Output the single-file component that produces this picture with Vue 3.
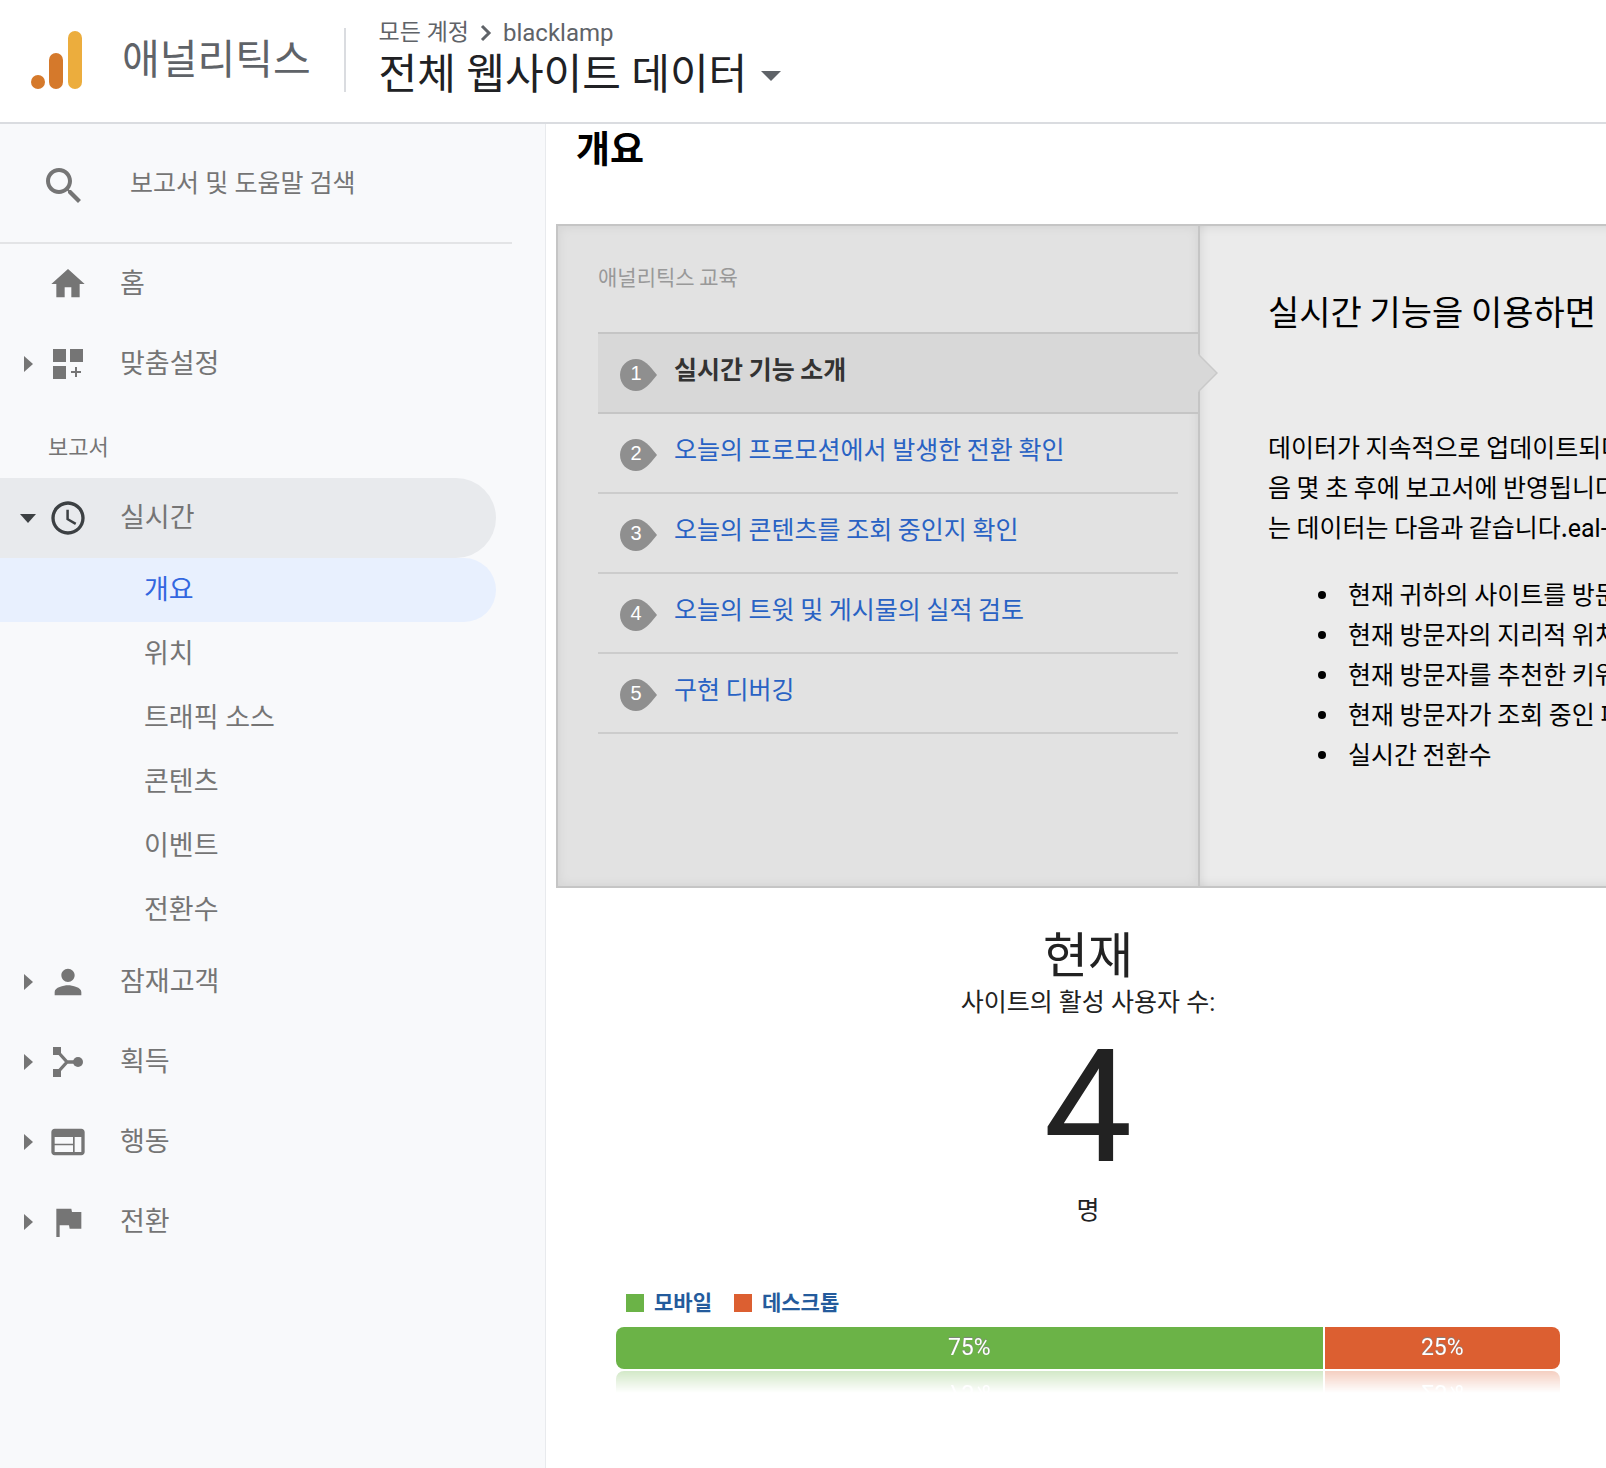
<script setup>
import { ref } from 'vue'

const query = ref('')

const realtimeItems = ['개요', '위치', '트래픽 소스', '콘텐츠', '이벤트', '전환수']
const current = '개요'

const lessons = [
  '실시간 기능 소개',
  '오늘의 프로모션에서 발생한 전환 확인',
  '오늘의 콘텐츠를 조회 중인지 확인',
  '오늘의 트윗 및 게시물의 실적 검토',
  '구현 디버깅',
]

const facts = [
  '현재 귀하의 사이트를 방문',
  '현재 방문자의 지리적 위치',
  '현재 방문자를 추천한 키워',
  '현재 방문자가 조회 중인 페',
  '실시간 전환수',
]

const devices = [
  { name: '모바일', share: 75, tone: 'green' },
  { name: '데스크톱', share: 25, tone: 'orange' },
]

const sections = [
  { name: '잠재고객', icon: 'person' },
  { name: '획득', icon: 'merge' },
  { name: '행동', icon: 'web' },
  { name: '전환', icon: 'flag' },
]
</script>

<template>
  <div class="app">
    <header class="topbar">
      <a class="brand" href="#">
        <svg class="logo" width="52" height="58" viewBox="0 0 52 58" aria-hidden="true">
          <circle cx="7" cy="51" r="7" fill="#d5792b" />
          <rect x="18" y="22" width="14" height="36" rx="7" fill="#d5792b" />
          <rect x="37" y="0" width="14" height="58" rx="7" fill="#ecad3d" />
        </svg>
        <span class="product">애널리틱스</span>
      </a>
      <div class="account">
        <div class="crumbs">
          <span>모든 계정</span>
          <svg width="12" height="18" viewBox="0 0 12 18" aria-hidden="true">
            <path d="M2 2l7 7-7 7" fill="none" stroke="#5f6368" stroke-width="3" />
          </svg>
          <span class="property">blacklamp</span>
        </div>
        <button class="view" type="button">
          <span>전체 웹사이트 데이터</span>
          <svg width="20" height="12" viewBox="0 0 20 12" aria-hidden="true">
            <path d="M0 2h20L10 12z" fill="#5f6368" />
          </svg>
        </button>
      </div>
    </header>

    <div class="body">
      <aside class="sidebar">
        <label class="search">
          <svg width="48" height="48" viewBox="0 0 24 24" fill="#757575" aria-hidden="true">
            <path d="M15.5 14h-.79l-.28-.27C15.41 12.59 16 11.11 16 9.5 16 5.91 13.09 3 9.5 3S3 5.91 3 9.5 5.91 16 9.5 16c1.61 0 3.09-.59 4.23-1.57l.27.28v.79l5 4.99L20.49 19l-4.99-5zm-6 0C7.01 14 5 11.99 5 9.5S7.01 5 9.5 5 14 7.01 14 9.5 11.99 14 9.5 14z" />
          </svg>
          <input v-model="query" type="text" placeholder="보고서 및 도움말 검색" aria-label="보고서 및 도움말 검색" />
        </label>

        <nav>
          <a class="row" href="#">
            <span class="arrow"></span>
            <svg class="icon" viewBox="0 0 24 24" aria-hidden="true"><path d="M10 20v-6h4v6h5v-8h3L12 3 2 12h3v8z" /></svg>
            <span>홈</span>
          </a>
          <a class="row" href="#">
            <svg class="arrow" viewBox="0 0 16 16" aria-hidden="true"><path d="M4 0l9 8-9 8z" /></svg>
            <svg class="icon" viewBox="0 0 40 40" aria-hidden="true">
              <path d="M5 5h13v13H5zM22 5h13v13H22zM5 22h13v13H5zM27 23h2v4h4v2h-4v4h-2v-4h-4v-2h4z" />
            </svg>
            <span>맞춤설정</span>
          </a>

          <h2 class="group">보고서</h2>

          <a class="row open" href="#">
            <svg class="arrow" viewBox="0 0 16 16" aria-hidden="true"><path d="M0 4h16l-8 9z" /></svg>
            <svg class="icon" viewBox="0 0 24 24" aria-hidden="true">
              <path d="M11.99 2C6.47 2 2 6.48 2 12s4.47 10 9.99 10C17.52 22 22 17.52 22 12S17.52 2 11.99 2zM12 20c-4.42 0-8-3.58-8-8s3.58-8 8-8 8 3.58 8 8-3.58 8-8 8z" />
              <path d="M12.5 7H11v6l5.25 3.15.75-1.23-4.5-2.67z" />
            </svg>
            <span>실시간</span>
          </a>
          <a
            v-for="item in realtimeItems"
            :key="item"
            class="sub"
            :class="{ current: item === current }"
            href="#"
          >{{ item }}</a>

          <a v-for="s in sections" :key="s.name" class="row" href="#">
            <svg class="arrow" viewBox="0 0 16 16" aria-hidden="true"><path d="M4 0l9 8-9 8z" /></svg>
            <svg v-if="s.icon === 'person'" class="icon" viewBox="0 0 24 24" aria-hidden="true">
              <path d="M12 12c2.21 0 4-1.79 4-4s-1.79-4-4-4-4 1.79-4 4 1.79 4 4 4zm0 2c-2.67 0-8 1.34-8 4v2h16v-2c0-2.66-5.33-4-8-4z" />
            </svg>
            <svg v-else-if="s.icon === 'merge'" class="icon" viewBox="0 0 40 40" aria-hidden="true">
              <path d="M5 5h8v8H5zM5 27h8v8H5z" />
              <circle cx="30" cy="20" r="5" />
              <path d="M10 10l9 10-9 10M19 20h11" fill="none" stroke="#757575" stroke-width="3.3" />
            </svg>
            <svg v-else-if="s.icon === 'web'" class="icon" viewBox="0 0 24 24" aria-hidden="true">
              <path d="M20 4H4c-1.1 0-1.99.9-1.99 2L2 18c0 1.1.9 2 2 2h16c1.1 0 2-.9 2-2V6c0-1.1-.9-2-2-2zm-5 14H4v-4h11v4zm0-5H4V9h11v4zm5 5h-4V9h4v9z" />
            </svg>
            <svg v-else class="icon" viewBox="0 0 24 24" aria-hidden="true">
              <path d="M14.4 6L14 4H5v17h2v-7h5.6l.4 2h7V6z" />
            </svg>
            <span>{{ s.name }}</span>
          </a>
        </nav>
      </aside>

      <main class="content">
        <h1>개요</h1>

        <section class="education">
          <div class="lessons">
            <p class="caption">애널리틱스 교육</p>
            <ol>
              <li v-for="(lesson, i) in lessons" :key="lesson" :class="{ active: i === 0 }">
                <span class="badge">
                  <svg width="38" height="34" viewBox="0 0 38 34" aria-hidden="true">
                    <path d="M17 1C8 1 1 8 1 17s7 16 16 16c8 0 13-6 21-16C30 7 25 1 17 1z" fill="#8f8f8f" />
                  </svg>
                  <span class="number">{{ i + 1 }}</span>
                </span>
                <strong v-if="i === 0">{{ lesson }}</strong>
                <a v-else href="#">{{ lesson }}</a>
                <svg v-if="i === 0" class="pointer" width="20" height="38" viewBox="0 0 20 38" aria-hidden="true">
                  <path d="M0 0l19 19L0 38z" fill="#d8d8d8" />
                  <path d="M1 1l18 18L1 37" fill="none" stroke="#c9c9c9" stroke-width="1.5" />
                </svg>
              </li>
            </ol>
          </div>
          <article class="article">
            <h2>실시간 기능을 이용하면</h2>
            <p>
              데이터가 지속적으로 업데이트되며<br />
              음 몇 초 후에 보고서에 반영됩니다<br />
              는 데이터는 다음과 같습니다.<span class="latin">eal-</span>
            </p>
            <ul>
              <li v-for="fact in facts" :key="fact">{{ fact }}</li>
            </ul>
          </article>
        </section>

        <section class="live">
          <h2>현재</h2>
          <p class="text">사이트의 활성 사용자 수:</p>
          <p class="count">4</p>
          <p class="text">명</p>

          <div class="legend">
            <span v-for="d in devices" :key="d.name" class="key">
              <i :class="d.tone"></i>{{ d.name }}
            </span>
          </div>
          <div class="bar">
            <div
              v-for="d in devices"
              :key="d.name"
              class="part"
              :class="d.tone"
              :style="{ flexGrow: d.share }"
            >{{ d.share }}%</div>
          </div>
        </section>
      </main>
    </div>
  </div>
</template>

<style>
body {
  margin: 0;
  background: #fff;
}
</style>

<style scoped>
.app {
  display: flex;
  flex-direction: column;
  min-height: 100vh;
  overflow: hidden;
  font-family: Roboto, "Noto Sans CJK KR", sans-serif;
  font-size: 25px;
  color: #000;
}

.app * {
  box-sizing: border-box;
}

h1,
h2,
p,
ol,
ul {
  margin: 0;
  padding: 0;
  font-weight: 400;
}

a {
  color: inherit;
  text-decoration: none;
}

svg {
  display: block;
  flex: none;
}

.topbar {
  display: flex;
  align-items: center;
  height: 124px;
  padding: 0 0 2px 31px;
  border-bottom: 2px solid #dadce0;
}

.brand {
  display: flex;
  align-items: center;
  gap: 39px;
  height: 64px;
  padding-right: 33px;
  border-right: 2px solid #dadce0;
}

.product {
  font-size: 41px;
  line-height: 64px;
  color: #5f6368;
}

.account {
  padding: 0 0 3px 33px;
}

.crumbs {
  display: flex;
  align-items: center;
  gap: 11px;
  font-size: 23px;
  line-height: 32px;
  color: #5f6368;
}

.property {
  font-size: 24px;
}

.view {
  display: flex;
  align-items: center;
  gap: 14px;
  padding: 0;
  border: 0;
  background: none;
  font-family: inherit;
  font-size: 42px;
  line-height: 52px;
  color: #202124;
}

.body {
  display: flex;
  flex: 1;
}

.sidebar {
  flex: 0 0 546px;
  background: #f8f9fb;
  border-right: 1px solid #e8eaed;
}

.search {
  display: flex;
  align-items: flex-start;
  gap: 42px;
  width: 512px;
  height: 120px;
  padding: 38px 0 0 40px;
  border-bottom: 2px solid #e3e4e6;
}

.search input {
  flex: 1;
  min-width: 0;
  height: 42px;
  padding: 0;
  border: 0;
  outline: 0;
  background: none;
  font-family: inherit;
  font-size: 25px;
  color: #757575;
}

.search input::placeholder {
  color: #757575;
  opacity: 1;
}

.row {
  display: flex;
  align-items: center;
  width: 496px;
  height: 80px;
  padding-left: 20px;
  border-radius: 0 40px 40px 0;
  font-size: 27px;
  line-height: 66px;
  color: #757575;
  fill: #757575;
}

.arrow {
  width: 16px;
  height: 16px;
  margin-right: 12px;
}

.icon {
  width: 40px;
  height: 40px;
  margin-right: 32px;
}

.open {
  background: #e8eaed;
  fill: #3c4043;
}

.group {
  padding: 28px 0 14px 48px;
  font-size: 22px;
  line-height: 32px;
  color: #757575;
}

.sub {
  display: block;
  width: 496px;
  height: 64px;
  padding-left: 144px;
  border-radius: 0 32px 32px 0;
  font-size: 27px;
  line-height: 64px;
  color: #757575;
}

.current {
  background: #e8f0fe;
  color: #3367e0;
}

.content {
  flex: 1;
  min-width: 0;
}

h1 {
  padding-left: 30px;
  font-size: 37px;
  font-weight: 700;
  line-height: 54px;
}

.education {
  display: flex;
  margin: 46px 0 0 10px;
  border: 2px solid #c5c5c5;
  border-right: 0;
  font-family: "Noto Sans CJK KR", sans-serif;
}

.lessons {
  flex: 0 0 642px;
  padding: 32px 0 152px 40px;
  background: #e2e2e2;
  border-right: 2px solid #c5c5c5;
  box-shadow: inset 0 0 12px rgba(0, 0, 0, 0.07);
}

.caption {
  font-size: 21px;
  line-height: 36px;
  color: #999;
}

ol {
  margin-top: 38px;
  list-style: none;
}

ol li {
  position: relative;
  display: flex;
  align-items: flex-start;
  gap: 17px;
  height: 80px;
  margin-right: 20px;
  padding: 24px 0 0 21px;
  border-bottom: 2px solid #ccc;
  line-height: 20px;
  color: #2962c4;
}

ol .active {
  height: 82px;
  margin-right: 0;
  border-top: 2px solid #c5c5c5;
  border-color: #c5c5c5;
  background: #d8d8d8;
  color: #333;
}

.badge {
  position: relative;
}

.number {
  position: absolute;
  top: 0;
  left: 0;
  width: 34px;
  font-family: "Liberation Sans", Arial, sans-serif;
  font-size: 20px;
  line-height: 30px;
  text-align: center;
  color: #fff;
}

.pointer {
  position: absolute;
  top: 20px;
  right: -20px;
}

.article {
  flex: 1;
  min-width: 0;
  padding: 60px 0 0 68px;
  overflow: hidden;
  background: #ebebeb;
  box-shadow: inset 12px 0 12px -12px rgba(0, 0, 0, 0.1), inset 0 12px 12px -12px rgba(0, 0, 0, 0.1),
    inset 0 -12px 12px -12px rgba(0, 0, 0, 0.1);
  line-height: 40px;
  white-space: nowrap;
}

.article h2 {
  font-size: 34px;
  line-height: 50px;
}

.article p {
  margin-top: 90px;
}

.latin {
  font-family: Roboto, sans-serif;
}

.article ul {
  margin-top: 24px;
  padding-left: 50px;
  list-style: none;
}

.article li {
  display: flex;
  align-items: center;
  gap: 22px;
}

.article li::before {
  content: "";
  flex: none;
  width: 8px;
  height: 8px;
  margin-top: 4px;
  border-radius: 50%;
  background: #000;
}

.live {
  padding: 37px 46px 0 70px;
  text-align: center;
  color: #222;
}

.live h2 {
  font-size: 49px;
  line-height: 64px;
}

.text {
  line-height: 28px;
}

.count {
  font-size: 158px;
  line-height: 180px;
}

.legend {
  display: flex;
  gap: 22px;
  margin-top: 63px;
  padding-left: 10px;
  font-size: 21px;
  font-weight: 700;
  line-height: 30px;
  color: #245b9c;
}

.key {
  display: flex;
  align-items: center;
  gap: 10px;
}

.key i {
  width: 18px;
  height: 18px;
}

.bar {
  display: flex;
  gap: 2px;
  height: 42px;
  margin-top: 9px;
  border-radius: 8px;
  overflow: hidden;
  -webkit-box-reflect: below 2px linear-gradient(transparent 48%, rgba(255, 255, 255, 0.3));
}

.part {
  flex-basis: 0;
  font-size: 23px;
  line-height: 42px;
  color: #fff;
  text-shadow: 0 -1px 1px #808080;
}

.green {
  background: #6bb347;
}

.orange {
  background: #dc5f31;
}
</style>
